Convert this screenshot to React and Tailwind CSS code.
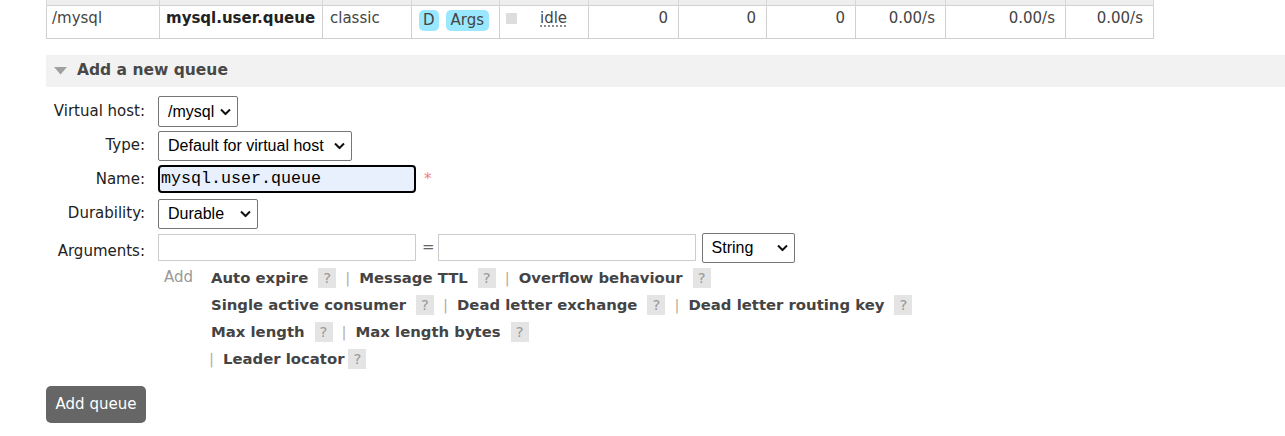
import React from "react";

const cols = [113, 163, 89, 88, 89, 90, 88, 89, 90, 120, 88];

function Chevron() {
  return (
    <svg width="11" height="7" viewBox="0 0 11 7" className="pointer-events-none absolute right-[7px] top-1/2 -translate-y-1/2">
      <path d="M1 1 L5.5 5.5 L10 1" fill="none" stroke="#111" strokeWidth="2" />
    </svg>
  );
}

function Select({ value, className }) {
  return (
    <div className={`relative ${className}`}>
      <select
        defaultValue={value}
        className="w-full h-full appearance-none border border-[#767676] rounded-[2px] bg-white pl-[9px] pr-[16px] text-[16px] text-black font-['Liberation_Sans',Arial,sans-serif] outline-none"
      >
        <option>{value}</option>
      </select>
      <Chevron />
    </div>
  );
}

function Help({ tight }) {
  return (
    <span
      className={`${tight ? "ml-[4px]" : "ml-[10px]"} inline-flex w-[18px] h-[20px] items-center justify-center bg-[#e4e4e4] text-[#999] font-normal`}
    >
      ?
    </span>
  );
}

function Sep() {
  return <span className="mx-[9px] text-[#b8aa9c] font-normal">|</span>;
}

function Opt({ label, tight }) {
  return (
    <span className="inline-flex items-center">
      <span className="font-bold text-[#444]">{label}</span>
      <Help tight={tight} />
    </span>
  );
}

function Row({ label, children, h, labelClass = "" }) {
  return (
    <div className={`flex items-center ${h}`}>
      <div className={`w-[99px] text-right text-[#222] ${labelClass}`}>{label}</div>
      <div className="ml-[13px] flex items-center">{children}</div>
    </div>
  );
}

export default function App() {
  return (
    <div className="w-full min-h-screen bg-white font-['DejaVu_Sans',Verdana,sans-serif] text-[15px] text-[#444]">
      <div className="pl-[46px]">
        {/* queue row */}
        <table className="table-fixed border-collapse w-[1107px]">
          <colgroup>
            {cols.map((w, i) => (
              <col key={i} style={{ width: w }} />
            ))}
          </colgroup>
          <tbody>
            <tr className="h-[5px] bg-[#eeeeee]">
              {cols.map((_, i) => (
                <td key={i} className="border-x border-[#d8d8d8] p-0" />
              ))}
            </tr>
            <tr className="h-[33px] leading-[20px]">
              <td className="border border-[#d0d0d0] px-[5px] pt-[2px] align-top">/mysql</td>
              <td className="border border-[#d0d0d0] px-[6px] pt-[2px] align-top font-bold text-[#222]">mysql.user.queue</td>
              <td className="border border-[#d0d0d0] px-[7px] pt-[2px] align-top">classic</td>
              <td className="border border-[#d0d0d0] px-[7px] align-top pt-[4px]">
                <div className="flex gap-[7px]">
                  <span className="bg-[#99e8ff] rounded-[5px] h-[21px] px-[4px] leading-[21px]">D</span>
                  <span className="bg-[#99e8ff] rounded-[5px] h-[21px] px-[5px] leading-[21px]">Args</span>
                </div>
              </td>
              <td className="border border-[#d0d0d0] pl-[6px] pr-[4px] pt-[2px] align-top">
                <div className="flex items-start">
                  <span className="block shrink-0 w-[11px] h-[11px] bg-[#dddddd] mt-[5px]" />
                  <span className="ml-[23px] underline decoration-dotted underline-offset-[3px] decoration-[#666]">idle</span>
                </div>
              </td>
              {["0", "0", "0", "0.00/s", "0.00/s", "0.00/s"].map((v, i) => (
                <td key={i} className="border border-[#d0d0d0] px-[10px] pt-[2px] align-top text-right">
                  {v}
                </td>
              ))}
            </tr>
          </tbody>
        </table>

        {/* section header */}
        <div className="mt-[16px] h-[32px] bg-[#f2f2f2] flex items-center pl-[8px]">
          <svg width="13" height="8" viewBox="0 0 13 8">
            <path d="M0 0 L13 0 L6.5 7.5 Z" fill="#a0a0a0" />
          </svg>
          <span className="ml-[10px] font-bold text-[#484848] text-[15.5px]">Add a new queue</span>
        </div>

        {/* form */}
        <div className="mt-[8px]">
          <Row label="Virtual host:" h="h-[34px]">
            <Select value="/mysql" className="w-[80px] h-[31px]" />
          </Row>
          <Row label="Type:" h="h-[34px]">
            <Select value="Default for virtual host" className="w-[194px] h-[30px]" />
          </Row>
          <Row label="Name:" h="h-[34px]">
            <input
              defaultValue="mysql.user.queue"
              className="w-[258px] h-[28px] -mt-[2px] border-2 border-black rounded-[4px] bg-[#e8f0fe] px-[1px] text-[16.67px] text-black font-['Liberation_Mono','Courier_New',monospace] outline-none"
            />
            <span className="ml-[8px] text-[#f08080] -mt-[1px]">*</span>
          </Row>
          <Row label="Durability:" h="h-[34px]">
            <Select value="Durable" className="w-[100px] h-[30px]" />
          </Row>
          <Row label="Arguments:" h="h-[34px]" labelClass="mt-[8px]">
            <input className="w-[258px] h-[27px] border border-[#cccccc] bg-white outline-none" />
            <span className="ml-[6px] mr-[3px] text-[#666]">=</span>
            <input className="w-[258px] h-[27px] border border-[#cccccc] bg-white outline-none" />
            <Select value="String" className="ml-[6px] w-[93px] h-[30px]" />
          </Row>

          <div className="flex pl-[112px]">
            <span className="w-[51px] pl-[6px] h-[27px] leading-[24px] text-[#999]">Add</span>
            <div className="flex flex-col text-[14.85px]">
              <div className="h-[27px] flex items-center pl-[2px]">
                <Opt label="Auto expire" />
                <Sep />
                <Opt label="Message TTL" />
                <Sep />
                <Opt label="Overflow behaviour" />
              </div>
              <div className="h-[27px] flex items-center pl-[2px]">
                <Opt label="Single active consumer" />
                <Sep />
                <Opt label="Dead letter exchange" />
                <Sep />
                <Opt label="Dead letter routing key" />
              </div>
              <div className="h-[27px] flex items-center pl-[2px]">
                <Opt label="Max length" />
                <Sep />
                <Opt label="Max length bytes" />
              </div>
              <div className="h-[27px] flex items-center">
                <span className="mr-[9px] text-[#b8aa9c]">|</span>
                <Opt label="Leader locator" tight />
              </div>
            </div>
          </div>

          <button className="mt-[13px] w-[100px] h-[37px] rounded-[5px] bg-[#666666] text-white text-[15px]">
            Add queue
          </button>
        </div>
      </div>
    </div>
  );
}
